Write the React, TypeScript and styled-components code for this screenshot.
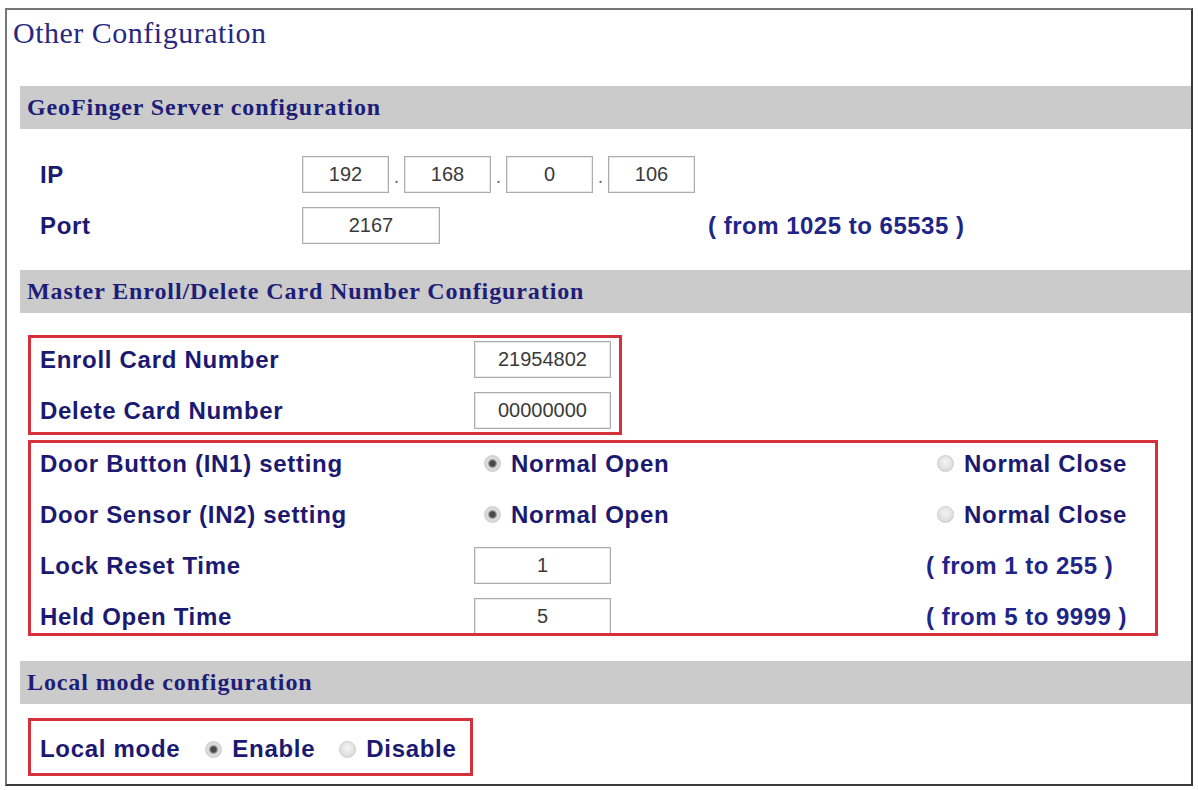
import React from "react";
import styled, { createGlobalStyle } from "styled-components";

const GlobalStyle = createGlobalStyle`
  html, body { margin: 0; padding: 0; background: #ffffff; }
  body { font-family: "Liberation Sans", Arial, sans-serif; }
`;

const Frame = styled.div`
  box-sizing: border-box;
  width: 1188px;
  height: 778px;
  margin: 8px 0 0 5px;
  border: 2px solid;
  border-color: #767676 #3a3a3a #3a3a3a #767676;
  padding-left: 6px;
  display: flex;
  flex-direction: column;
`;

const Title = styled.h1`
  margin: 0;
  height: 76px;
  box-sizing: border-box;
  padding-top: 5px;
  font: 400 30px/36px "Liberation Serif", "Times New Roman", serif;
  letter-spacing: 0.5px;
  color: #28287f;
`;

const Content = styled.div`
  margin-left: 7px;
  display: flex;
  flex-direction: column;
`;

const SectionBar = styled.h2<{ $mt?: number }>`
  margin: ${(p) => p.$mt ?? 0}px 0 0;
  height: 43px;
  box-sizing: border-box;
  background: #cbcbcb;
  padding-left: 7px;
  font: 700 24px/42px "Liberation Serif", "Times New Roman", serif;
  letter-spacing: 0.9px;
  color: #1e1d78;
`;

const ServerGrid = styled.div`
  display: grid;
  grid-template-columns: 262px 406px auto;
  grid-auto-rows: 37px;
  row-gap: 14px;
  align-items: center;
  padding-left: 20px;
  margin: 27px 0 26px;
`;

const Label = styled.span`
  font: 700 24px/28px "Liberation Sans", Arial, sans-serif;
  letter-spacing: 0.7px;
  color: #1b1a70;
  white-space: nowrap;
`;

const Range = styled.span<{ $indent?: number }>`
  font: 700 24px/28px "Liberation Sans", Arial, sans-serif;
  letter-spacing: 0.5px;
  color: #1e2587;
  white-space: nowrap;
  margin-left: ${(p) => p.$indent ?? 0}px;
`;

const Field = styled.input<{ $w: number }>`
  box-sizing: border-box;
  width: ${(p) => p.$w}px;
  height: 37px;
  margin: 0;
  padding: 0;
  border: 1px solid #acacac;
  box-shadow: inset 0 0 0 1px #e8e8e8;
  background: #ffffff;
  text-align: center;
  font: 400 20px "Liberation Sans", Arial, sans-serif;
  color: #3a3a3a;
  outline: none;
`;

const IpGroup = styled.div`
  display: flex;
  align-items: center;
`;

const IpDot = styled.span`
  width: 15px;
  padding-top: 4px;
  text-align: center;
  font: 400 20px/37px "Liberation Sans", Arial, sans-serif;
  color: #707070;
`;

const Outlined = styled.div<{ $w: number; $h: number; $mt: number }>`
  box-sizing: border-box;
  width: ${(p) => p.$w}px;
  height: ${(p) => p.$h}px;
  margin: ${(p) => p.$mt}px 0 0 8px;
  border: 3px solid #d7303d;
  overflow: hidden;
`;

const CardGrid = styled.div`
  display: grid;
  grid-template-columns: 434px 137px;
  grid-auto-rows: 37px;
  row-gap: 14px;
  align-items: center;
  padding: 3px 0 0 9px;
`;

const DoorGrid = styled.div`
  display: grid;
  grid-template-columns: 434px 452px 1fr;
  grid-auto-rows: 37px;
  row-gap: 14px;
  align-items: center;
  padding: 2px 0 0 9px;
`;

const LocalRow = styled.div`
  display: flex;
  align-items: center;
  height: 100%;
  padding: 4px 0 0 9px;
  box-sizing: border-box;
`;

const Choice = styled.label<{ $indent?: number }>`
  display: inline-flex;
  align-items: center;
  gap: 10px;
  margin-left: ${(p) => p.$indent ?? 0}px;
  font: 700 24px/28px "Liberation Sans", Arial, sans-serif;
  letter-spacing: 0.7px;
  color: #1b1a70;
  white-space: nowrap;
`;

const Radio = styled.input.attrs({ type: "radio" })`
  appearance: none;
  -webkit-appearance: none;
  margin: 0;
  width: 17px;
  height: 17px;
  box-sizing: border-box;
  border-radius: 50%;
  border: 1px solid #cdcdcd;
  background: radial-gradient(circle at 50% 40%, #f5f5f5 0%, #dedede 65%, #cacaca 100%);
  flex: none;
  &:checked {
    background: radial-gradient(
      circle at 50% 50%,
      #484848 0 2.6px,
      #8a8a8a 3.6px,
      #dcdcdc 5px,
      #d0d0d0 100%
    );
  }
`;

type Opt = { label: string; checked: boolean };

const RadioChoice: React.FC<{ name: string; opt: Opt; indent?: number }> = ({ name, opt, indent }) => (
  <Choice $indent={indent}>
    <Radio name={name} defaultChecked={opt.checked} />
    {opt.label}
  </Choice>
);

const ipParts = ["192", "168", "0", "106"];

export default function App() {
  return (
    <>
      <GlobalStyle />
      <Frame>
        <Title>Other Configuration</Title>
        <Content>
          <SectionBar>GeoFinger Server configuration</SectionBar>
          <ServerGrid>
            <Label>IP</Label>
            <IpGroup>
              {ipParts.map((v, i) => (
                <React.Fragment key={i}>
                  {i > 0 && <IpDot>.</IpDot>}
                  <Field $w={87} value={v} readOnly />
                </React.Fragment>
              ))}
            </IpGroup>
            <span />
            <Label>Port</Label>
            <Field $w={138} value="2167" readOnly />
            <Range>( from 1025 to 65535 )</Range>
          </ServerGrid>

          <SectionBar>Master Enroll/Delete Card Number Configuration</SectionBar>
          <Outlined $w={594} $h={100} $mt={22}>
            <CardGrid>
              <Label>Enroll Card Number</Label>
              <Field $w={137} value="21954802" readOnly />
              <Label>Delete Card Number</Label>
              <Field $w={137} value="00000000" readOnly />
            </CardGrid>
          </Outlined>
          <Outlined $w={1130} $h={196} $mt={5}>
            <DoorGrid>
              <Label>Door Button (IN1) setting</Label>
              <RadioChoice name="in1" opt={{ label: "Normal Open", checked: true }} indent={10} />
              <RadioChoice name="in1" opt={{ label: "Normal Close", checked: false }} indent={11} />
              <Label>Door Sensor (IN2) setting</Label>
              <RadioChoice name="in2" opt={{ label: "Normal Open", checked: true }} indent={10} />
              <RadioChoice name="in2" opt={{ label: "Normal Close", checked: false }} indent={11} />
              <Label>Lock Reset Time</Label>
              <Field $w={137} value="1" readOnly />
              <Range>( from 1 to 255 )</Range>
              <Label>Held Open Time</Label>
              <Field $w={137} value="5" readOnly />
              <Range>( from 5 to 9999 )</Range>
            </DoorGrid>
          </Outlined>

          <SectionBar $mt={25}>Local mode configuration</SectionBar>
          <Outlined $w={445} $h={58} $mt={14}>
            <LocalRow>
              <Label>Local mode</Label>
              <RadioChoice name="local" opt={{ label: "Enable", checked: true }} indent={25} />
              <RadioChoice name="local" opt={{ label: "Disable", checked: false }} indent={24} />
            </LocalRow>
          </Outlined>
        </Content>
      </Frame>
    </>
  );
}
